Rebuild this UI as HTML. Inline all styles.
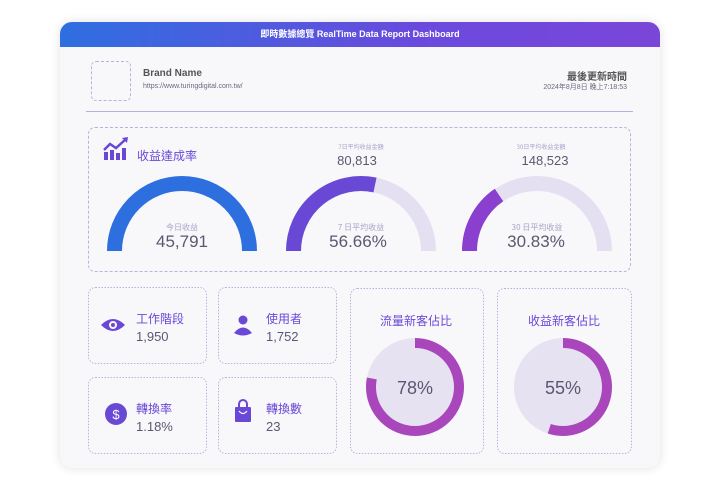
<!DOCTYPE html>
<html><head><meta charset="utf-8"><style>
*{margin:0;padding:0;box-sizing:border-box}
body{width:720px;height:490px;background:#fff;font-family:"Liberation Sans","Noto Sans CJK TC",sans-serif;position:relative;overflow:hidden}
.card{position:absolute;left:60px;top:22px;width:600px;height:446px;background:#f8f8fb;border-radius:12px;box-shadow:0 0 10px rgba(0,0,0,.12);overflow:hidden}
.hdr{height:25px;background:linear-gradient(90deg,#2e6fe0,#6a4ade 60%,#7a46d8);color:#fff;font-size:9px;font-weight:bold;text-align:center;line-height:25px}
.abs{position:absolute}
.box{position:absolute;border:1px dashed #b9b2dc;border-radius:7px}
</style></head><body>
<div class="card">
<div class="hdr">即時數據總覽 RealTime Data Report Dashboard</div>
<div class="box" style="left:31px;top:39px;width:40px;height:40px;border-radius:5px"></div>
<div class="abs" style="left:83px;top:46px;font-size:10px;font-weight:bold;color:#555">Brand Name</div>
<div class="abs" style="left:83px;top:61px;font-size:7px;color:#6a6880">https://www.turingdigital.com.tw/</div>
<div class="abs" style="right:33px;top:46px;font-size:10px;font-weight:bold;color:#555">最後更新時間</div>
<div class="abs" style="right:33px;top:60px;font-size:7px;color:#6a6880">2024年8月8日 晚上7:18:53</div>
<div class="abs" style="left:26px;top:89px;width:547px;height:1px;background:#b6b0da"></div>
<div class="box" style="left:28px;top:105px;width:543px;height:145px"></div>
</div>
<svg class="abs" style="left:0;top:0" width="720" height="490">
<g fill="#6a48d6"><rect x="104" y="152" width="4" height="8"/><rect x="110" y="150" width="4" height="10"/><rect x="116" y="153" width="4" height="7"/><rect x="122" y="148" width="4" height="12"/></g>
<polyline points="104,150 110,144 116,148 126,139" fill="none" stroke="#6a48d6" stroke-width="2.5"/>
<polygon points="122,138 128,137 127,143" fill="#6a48d6"/>
<text x="137" y="160" font-size="12" fill="#6a48d6" font-family="Liberation Sans,Noto Sans CJK TC,sans-serif">收益達成率</text>
<path d="M114.5 251 A67.5 67.5 0 0 1 249.5 251" fill="none" stroke="#2e6fe0" stroke-width="15"/>
<text x="182" y="230" font-size="8" fill="#a9a3c8" text-anchor="middle" font-family="Noto Sans CJK TC,sans-serif">今日收益</text>
<text x="182" y="247" font-size="17" fill="#5a5870" text-anchor="middle" font-family="Liberation Sans,sans-serif">45,791</text>
<path d="M293.5 251 A67.5 67.5 0 0 1 428.5 251" fill="none" stroke="#e4e0f2" stroke-width="15"/>
<path d="M293.5 251 A67.5 67.5 0 0 1 375 185" fill="none" stroke="#6a48d6" stroke-width="15"/>
<text x="361" y="149" font-size="6" fill="#a9a3c8" text-anchor="middle" font-family="Noto Sans CJK TC,sans-serif">7日平均收益金額</text>
<text x="357" y="165" font-size="13" fill="#5a5870" text-anchor="middle">80,813</text>
<text x="361" y="230" font-size="8" fill="#a9a3c8" text-anchor="middle" font-family="Noto Sans CJK TC,sans-serif">7 日平均收益</text>
<text x="358" y="247" font-size="17" fill="#5a5870" text-anchor="middle">56.66%</text>
<path d="M469.5 251 A67.5 67.5 0 0 1 604.5 251" fill="none" stroke="#e4e0f2" stroke-width="15"/>
<path d="M469.5 251 A67.5 67.5 0 0 1 499 195" fill="none" stroke="#8a3fcf" stroke-width="15"/>
<text x="541" y="149" font-size="6" fill="#a9a3c8" text-anchor="middle" font-family="Noto Sans CJK TC,sans-serif">30日平均收益金額</text>
<text x="545" y="165" font-size="13" fill="#5a5870" text-anchor="middle">148,523</text>
<text x="537" y="230" font-size="8" fill="#a9a3c8" text-anchor="middle" font-family="Noto Sans CJK TC,sans-serif">30 日平均收益</text>
<text x="536" y="247" font-size="17" fill="#5a5870" text-anchor="middle">30.83%</text>
<g fill="none" stroke="#b9b2dc" stroke-dasharray="1.5 1.5">
<rect x="88.5" y="287.5" width="118" height="76" rx="7"/><rect x="218.5" y="287.5" width="118" height="76" rx="7"/>
<rect x="88.5" y="377.5" width="118" height="76" rx="7"/><rect x="218.5" y="377.5" width="118" height="76" rx="7"/>
<rect x="350.5" y="288.5" width="133" height="165" rx="7"/><rect x="497.5" y="288.5" width="134" height="165" rx="7"/>
</g>
<path d="M101 325 Q113 313 125 325 Q113 337 101 325Z" fill="#6a48d6"/><circle cx="113" cy="325" r="4" fill="#f8f8fb"/><circle cx="113" cy="325" r="2" fill="#6a48d6"/>
<text x="136" y="323" font-size="12" fill="#6a48d6" font-family="Noto Sans CJK TC,sans-serif">工作階段</text>
<text x="136" y="341" font-size="13" fill="#5a5870">1,950</text>
<circle cx="243" cy="320" r="4.5" fill="#6a48d6"/><path d="M234 333 Q243 322 252 333 Q243 338 234 333Z" fill="#6a48d6"/>
<text x="266" y="323" font-size="12" fill="#6a48d6" font-family="Noto Sans CJK TC,sans-serif">使用者</text>
<text x="266" y="341" font-size="13" fill="#5a5870">1,752</text>
<circle cx="116" cy="414" r="11" fill="#6a48d6"/><text x="116" y="419" font-size="13" fill="#fff" text-anchor="middle">$</text>
<text x="136" y="413" font-size="12" fill="#6a48d6" font-family="Noto Sans CJK TC,sans-serif">轉換率</text>
<text x="136" y="431" font-size="13" fill="#5a5870">1.18%</text>
<rect x="235" y="407" width="16" height="15" rx="1" fill="#6a48d6"/><path d="M239 407 V404 A4 4 0 0 1 247 404 V407" fill="none" stroke="#6a48d6" stroke-width="2"/><path d="M239 411 Q243 416 247 411" fill="none" stroke="#f8f8fb" stroke-width="1.3"/>
<text x="266" y="413" font-size="12" fill="#6a48d6" font-family="Noto Sans CJK TC,sans-serif">轉換數</text>
<text x="266" y="431" font-size="13" fill="#5a5870">23</text>
<text x="416" y="325" font-size="12" fill="#6a48d6" text-anchor="middle" font-family="Noto Sans CJK TC,sans-serif">流量新客佔比</text>
<circle cx="415" cy="387" r="49" fill="#e6e2f2"/>
<circle cx="415" cy="387" r="44" fill="none" stroke="#a946bb" stroke-width="10" stroke-dasharray="215.6 300" transform="rotate(-90 415 387)"/>
<text x="415" y="394" font-size="18" fill="#5a5870" text-anchor="middle">78%</text>
<text x="564" y="325" font-size="12" fill="#6a48d6" text-anchor="middle" font-family="Noto Sans CJK TC,sans-serif">收益新客佔比</text>
<circle cx="563" cy="387" r="49" fill="#e6e2f2"/>
<circle cx="563" cy="387" r="44" fill="none" stroke="#a946bb" stroke-width="10" stroke-dasharray="152 300" transform="rotate(-90 563 387)"/>
<text x="563" y="394" font-size="18" fill="#5a5870" text-anchor="middle">55%</text>
</svg>
</body></html>
